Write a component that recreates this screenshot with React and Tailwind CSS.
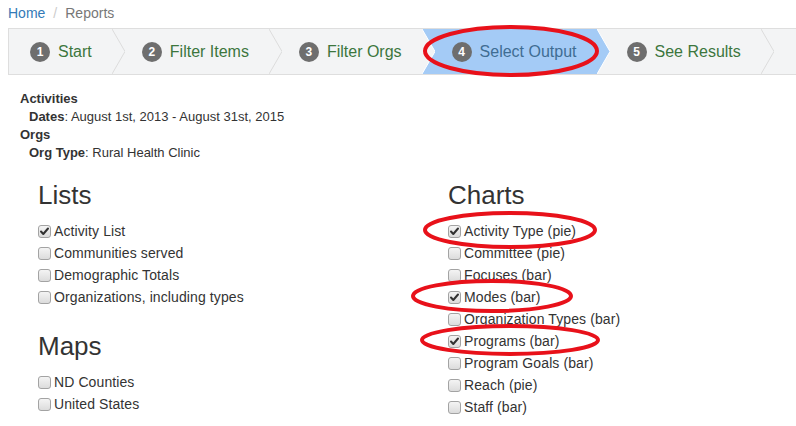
import React from "react";

const steps = [
  { n: 1, label: "Start" },
  { n: 2, label: "Filter Items" },
  { n: 3, label: "Filter Orgs" },
  { n: 4, label: "Select Output", active: true },
  { n: 5, label: "See Results" },
];

const GRAY = "#f3f4f5";
const BLUE = "#a4cbf6";

function Chevron({ left, right, line }) {
  return (
    <svg width="13" height="45" viewBox="0 0 13 45" className="flex-none block">
      <rect x="0" y="0" width="13" height="45" fill={right} />
      <polygon points="0,0 13,22.5 0,45" fill={left} />
      <polyline points="0,0 13,22.5 0,45" fill="none" stroke={line} strokeWidth="1" />
    </svg>
  );
}

function Box({ checked }) {
  return (
    <span className="relative inline-block w-[13px] h-[13px] flex-none rounded-[3px] border border-[#a3a3a3] bg-gradient-to-b from-[#f4f4f4] to-[#dcdcdc]">
      {checked && (
        <svg viewBox="0 0 13 13" className="absolute left-[-1px] top-[-1px] w-[13px] h-[13px]">
          <path d="M3 6.5 L5.3 9 L10 3.5" fill="none" stroke="#333" strokeWidth="2" strokeLinecap="round" strokeLinejoin="round" />
        </svg>
      )}
    </span>
  );
}

function Check({ label, checked }) {
  return (
    <label className="flex items-center gap-[3px] h-[22px] text-[14px] text-[#333] tracking-[0.1px]">
      <Box checked={checked} />
      <span>{label}</span>
    </label>
  );
}

export default function App() {
  return (
    <div
      className="relative w-[796px] h-[426px] overflow-hidden bg-white text-[#333]"
      style={{ fontFamily: '"Liberation Sans", Arial, sans-serif' }}
    >
      {/* breadcrumb */}
      <div className="flex items-center h-[26px] pl-2 text-[14px]">
        <span className="text-[#337ab7]">Home</span>
        <span className="px-[8px] text-[#ccc]">/</span>
        <span className="text-[#777]">Reports</span>
      </div>

      {/* steps */}
      <div className="ml-2 mt-[2px] w-[840px] flex border border-[#dedede] bg-[#f3f4f5] h-[47px]">
        {steps.map((s, i) => {
          const prev = steps[i - 1];
          return (
            <React.Fragment key={s.n}>
              {i > 0 && (
                <Chevron
                  left={prev.active ? BLUE : GRAY}
                  right={s.active ? BLUE : GRAY}
                  line={prev.active || s.active ? "#ffffff" : "#dcdcdc"}
                />
              )}
              <div
                className={
                  "flex items-center gap-[8px] pr-[20px] " +
                  (i === 0 ? "pl-[21px] " : "pl-[17px] ") +
                  (s.active ? "bg-[#a4cbf6]" : "")
                }
              >
                <span className="flex items-center justify-center w-[20px] h-[20px] rounded-full bg-[#6e6e6e] text-white text-[12px] font-bold">
                  {s.n}
                </span>
                <span className={"text-[16px] " + (s.active ? "text-[#3f6d93]" : "text-[#3c763d]")}>
                  {s.label}
                </span>
              </div>
            </React.Fragment>
          );
        })}
        <Chevron left={GRAY} right={GRAY} line="#dcdcdc" />
      </div>

      {/* summary */}
      <div className="mt-[15px] pl-5 text-[13px] leading-[18px]">
        <div className="font-bold">Activities</div>
        <div className="pl-[9px]">
          <b>Dates</b>: August 1st, 2013 - August 31st, 2015
        </div>
        <div className="font-bold">Orgs</div>
        <div className="pl-[9px]">
          <b>Org Type</b>: Rural Health Clinic
        </div>
      </div>

      {/* columns */}
      <div className="grid grid-cols-[410px_1fr] pl-[38px] mt-[18px]">
        <div>
          <h2 className="text-[26px] leading-[30px] font-normal mb-[10px]">Lists</h2>
          <Check label="Activity List" checked />
          <Check label="Communities served" />
          <Check label="Demographic Totals" />
          <Check label="Organizations, including types" />
          <h2 className="text-[26px] leading-[30px] font-normal mt-[23px] mb-[10px]">Maps</h2>
          <Check label="ND Counties" />
          <Check label="United States" />
        </div>
        <div>
          <h2 className="text-[26px] leading-[30px] font-normal mb-[10px]">Charts</h2>
          <Check label="Activity Type (pie)" checked />
          <Check label="Committee (pie)" />
          <Check label="Focuses (bar)" />
          <Check label="Modes (bar)" checked />
          <Check label="Organization Types (bar)" />
          <Check label="Programs (bar)" checked />
          <Check label="Program Goals (bar)" />
          <Check label="Reach (pie)" />
          <Check label="Staff (bar)" />
        </div>
      </div>

      {/* red annotation ellipses */}
      <svg className="absolute inset-0 pointer-events-none" width="796" height="426">
        <g fill="none" stroke="#e8111a" strokeWidth="4">
          <ellipse cx="511" cy="51" rx="86" ry="24" />
          <ellipse cx="510" cy="230" rx="85" ry="17" />
          <ellipse cx="492" cy="296" rx="79" ry="15" />
          <ellipse cx="510" cy="340" rx="88" ry="14" />
        </g>
      </svg>
    </div>
  );
}
